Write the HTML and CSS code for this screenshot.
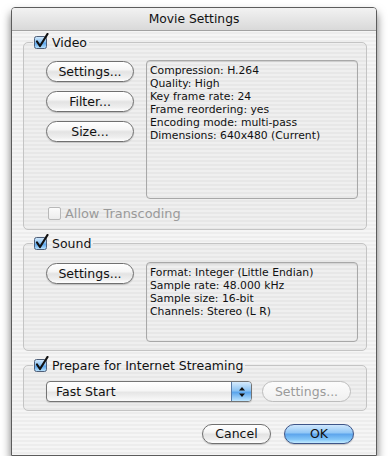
FILE: index.html
```html
<!DOCTYPE html>
<html lang="en">
<head>
    <meta charset="UTF-8">
    <title>Movie Settings</title>
    <link rel="stylesheet" href="styles.css">
</head>
<body>
    <svg class="defs" width="0" height="0">
        <defs>
            <linearGradient id="aqua" x1="0" y1="0" x2="0" y2="1">
                <stop offset="0" stop-color="#d6ebfd"/>
                <stop offset="0.45" stop-color="#8cc3f3"/>
                <stop offset="0.55" stop-color="#5aa5ec"/>
                <stop offset="1" stop-color="#bfe6ff"/>
            </linearGradient>
            <symbol id="chk" viewBox="0 0 17 17">
                <rect x="1.5" y="3.5" width="12" height="12" rx="2" fill="url(#aqua)" stroke="#4f5f78"/>
                <path d="M4 8.5 L7 13 L14.5 1" fill="none" stroke="#111" stroke-width="2.2" stroke-linecap="round" stroke-linejoin="round"/>
            </symbol>
        </defs>
    </svg>

    <div class="window">
        <div class="titlebar">Movie Settings</div>
        <div class="content">
            <fieldset class="group group-video">
                <legend><svg class="check"><use href="#chk"/></svg>Video</legend>
                <div class="group-row">
                    <div class="btn-col">
                        <button class="btn">Settings...</button>
                        <button class="btn">Filter...</button>
                        <button class="btn">Size...</button>
                    </div>
                    <div class="info info-video">
                        Compression: H.264<br>
                        Quality: High<br>
                        Key frame rate: 24<br>
                        Frame reordering: yes<br>
                        Encoding mode: multi-pass<br>
                        Dimensions: 640x480 (Current)
                    </div>
                </div>
                <label class="option disabled"><span class="box"></span>Allow Transcoding</label>
            </fieldset>

            <fieldset class="group group-sound">
                <legend><svg class="check"><use href="#chk"/></svg>Sound</legend>
                <div class="group-row">
                    <div class="btn-col">
                        <button class="btn">Settings...</button>
                    </div>
                    <div class="info info-sound">
                        Format: Integer (Little Endian)<br>
                        Sample rate: 48.000 kHz<br>
                        Sample size: 16-bit<br>
                        Channels: Stereo (L R)
                    </div>
                </div>
            </fieldset>

            <fieldset class="group group-stream">
                <legend><svg class="check"><use href="#chk"/></svg>Prepare for Internet Streaming</legend>
                <div class="stream-row">
                    <div class="popup">
                        <span class="popup-label">Fast Start</span>
                        <span class="popup-arrows">
                            <svg width="8" height="12" viewBox="0 0 8 12"><path d="M4 1 L7 4.5 H1 Z M4 11 L7 7.5 H1 Z" fill="#111"/></svg>
                        </span>
                    </div>
                    <button class="btn btn-disabled">Settings...</button>
                </div>
            </fieldset>

            <div class="footer">
                <button class="btn btn-cancel">Cancel</button>
                <button class="btn btn-ok">OK</button>
            </div>
        </div>
    </div>
</body>
</html>
```

FILE: styles.css
```css
*, *::before, *::after {
    box-sizing: border-box;
}
body {
    margin: 0;
    background: #fff;
    font-family: "DejaVu Sans", "Liberation Sans", sans-serif;
    font-size: 12px;
    color: #111;
}
.defs { position: absolute; }

.window {
    margin: 7px 0 0 11px;
    width: 366px;
    height: 449px;
    border: 1px solid #5c5c5c;
    border-radius: 4px 4px 0 0;
    background: repeating-linear-gradient(#ededed 0 2px, #f5f5f5 2px 4px);
    box-shadow: 0 6px 10px rgba(0, 0, 0, 0.55);
}
.titlebar {
    height: 23px;
    border-bottom: 1px solid #a2a2a2;
    border-radius: 3px 3px 0 0;
    background: linear-gradient(#f2f2f2, #d9d9d9);
    text-align: center;
    font-size: 12.3px;
    line-height: 22px;
}
.content {
    padding: 3px 9px 0 11px;
}

.group {
    margin: 0;
    padding: 0 0 0 22px;
    border: 1px solid #c4c4c4;
    border-radius: 5px;
    background: rgba(0, 0, 0, 0.025);
}
.group legend {
    display: flex;
    align-items: center;
    height: 16px;
    margin-left: -13px;
    padding: 0 2px 0 0;
    font-size: 12.5px;
}
.check {
    width: 17px;
    height: 17px;
    margin: -1px 2px 0 0;
}

.group-row {
    display: flex;
    gap: 12px;
}
.group-video {
    height: 196px;
}
.group-video .group-row {
    padding-top: 10px;
}
.btn-col {
    display: flex;
    flex-direction: column;
    gap: 9px;
    padding-top: 1px;
}

.btn {
    width: 88px;
    height: 21px;
    padding: 0;
    border: 1px solid #707070;
    border-radius: 11px;
    background: linear-gradient(#ffffff 0%, #f5f5f5 40%, #e3e3e3 52%, #eeeeee 80%, #ffffff 100%);
    box-shadow: 0 1px 1px rgba(0, 0, 0, 0.18);
    font-family: inherit;
    font-size: 12.5px;
    color: #111;
    line-height: 19px;
}

.info {
    width: 212px;
    padding: 3px 3px;
    border: 1px solid #a8a8a8;
    border-radius: 4px;
    box-shadow: inset 0 1px 1px rgba(0, 0, 0, 0.12);
    font-size: 10.8px;
    line-height: 13px;
}
.info-video {
    height: 139px;
}
.info-sound {
    height: 80px;
}

.option {
    display: flex;
    align-items: center;
    gap: 4px;
    margin: 7px 0 0 2px;
    font-size: 12.9px;
}
.option .box {
    width: 13px;
    height: 13px;
    border: 1px solid #b8b8b8;
    border-radius: 2px;
    background: linear-gradient(#fbfbfb, #ececec);
}
.disabled {
    color: #9a9a9a;
}

.group-sound {
    margin-top: 5px;
    height: 116px;
}
.group-sound .group-row {
    padding-top: 11px;
}
.group-sound .btn-col {
    padding-top: 1px;
}

.group-stream {
    margin-top: 6px;
    height: 54px;
}
.stream-row {
    display: flex;
    gap: 10px;
    padding-top: 8px;
}
.popup {
    display: flex;
    width: 206px;
    height: 21px;
    border: 1px solid #747474;
    border-radius: 4px;
    overflow: hidden;
    background: linear-gradient(#ffffff 0%, #f6f6f6 45%, #e6e6e6 55%, #fafafa 100%);
    box-shadow: 0 1px 1px rgba(0, 0, 0, 0.15);
}
.popup-label {
    flex: 1;
    padding-left: 9px;
    font-size: 12.5px;
    line-height: 19px;
}
.popup-arrows {
    display: flex;
    align-items: center;
    justify-content: center;
    width: 20px;
    border-left: 1px solid #5a7ba6;
    background: linear-gradient(#d6ebfd 0%, #8cc3f3 45%, #5aa5ec 55%, #bfe6ff 100%);
}
.btn-disabled {
    width: 89px;
    border-color: #bdbdbd;
    background: linear-gradient(#fcfcfc, #f0f0f0);
    box-shadow: none;
    color: #9a9a9a;
}

.footer {
    display: flex;
    justify-content: flex-end;
    gap: 13px;
    padding: 13px 13px 0 0;
}
.btn-cancel {
    width: 69px;
    height: 20px;
    line-height: 18px;
}
.btn-ok {
    width: 70px;
    height: 20px;
    line-height: 18px;
    border-color: #3e5588;
    background: linear-gradient(#cfe7fd 0%, #93c8f6 42%, #5ea6ec 52%, #83c6f8 80%, #c4ecff 100%);
}
```
